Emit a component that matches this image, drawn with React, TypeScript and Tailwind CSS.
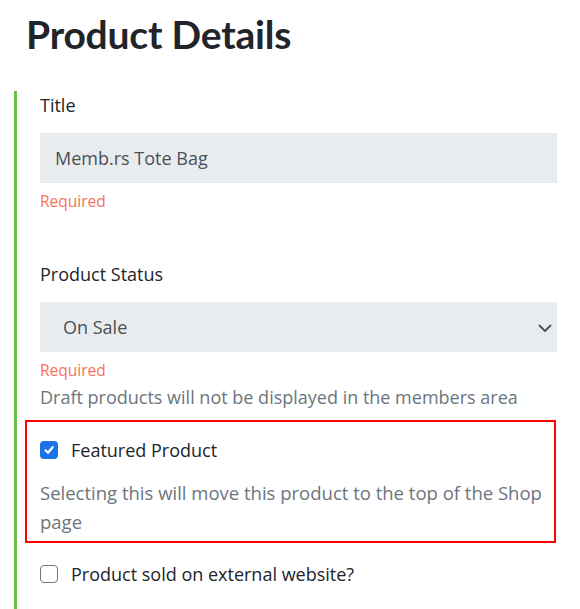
import React, { useState } from 'react';

const heading = { fontFamily: 'Lato, "Noto Sans", sans-serif' };
const body = { fontFamily: '"Open Sans", "Noto Sans", sans-serif' };

function Check({ checked, onToggle }: { checked: boolean; onToggle: () => void }) {
  return (
    <span
      onClick={onToggle}
      className={`flex h-[18px] w-[18px] shrink-0 items-center justify-center rounded-[4px] ${
        checked ? 'bg-[#1a73e8]' : 'border border-[#767676] bg-white'
      }`}
    >
      {checked && (
        <svg width="12" height="12" viewBox="0 0 12 12" fill="none">
          <path d="M2.5 6.3 L5 8.8 L9.7 3.2" stroke="white" strokeWidth="2.2" strokeLinecap="round" strokeLinejoin="round" />
        </svg>
      )}
    </span>
  );
}

export default function App() {
  const [featured, setFeatured] = useState(true);
  const [external, setExternal] = useState(false);

  return (
    <div className="min-h-screen bg-white text-[#212529]" style={body}>
      <div className="pt-[10px] pl-[26px]">
        <h1 className="text-[39px] leading-[48px] font-bold tracking-[-0.2px]" style={heading}>
          Product Details
        </h1>
      </div>

      <div className="mt-[33px] ml-[14px] border-l-[3px] border-[#6cc04a] pl-[23px] pr-[23px] pb-[30px]">
        {/* Title */}
        <label className="block pt-[2px] text-[18px] leading-[24px]">Title</label>
        <input
          className="mt-[16px] block w-full h-[50px] bg-[#e9ecef] px-[15px] text-[18px] text-[#495057] outline-none"
          defaultValue="Memb.rs Tote Bag"
          style={body}
        />
        <div className="mt-[6px] text-[15.5px] leading-[24px] text-[#f7705a]">Required</div>

        {/* Status */}
        <label className="block mt-[49px] text-[18px] leading-[24px]">Product Status</label>
        <div className="relative mt-[16px] h-[50px] bg-[#e9ecef]">
          <div className="flex h-full items-center pl-[23px] text-[18px] text-[#495057]">On Sale</div>
          <svg className="absolute right-[5px] top-[22px]" width="14" height="9" viewBox="0 0 14 9" fill="none">
            <path d="M1.5 1.5 L7 7 L12.5 1.5" stroke="#495057" strokeWidth="1.8" strokeLinecap="round" strokeLinejoin="round" />
          </svg>
        </div>
        <div className="mt-[6px] text-[15.5px] leading-[24px] text-[#f7705a]">Required</div>
        <div className="text-[18px] leading-[30px] text-[#6c757d]">Draft products will not be displayed in the members area</div>

        {/* Featured */}
        <div className="mt-[8px] -ml-[15px] mr-[1px] border-2 border-[#ff0000] pl-[13px] pr-[10px] pt-[16px] pb-[5px]">
          <label className="flex items-center gap-[13px] cursor-pointer">
            <Check checked={featured} onToggle={() => setFeatured(!featured)} />
            <span className="text-[18px] leading-[24px]">Featured Product</span>
          </label>
          <p className="mt-[16px] text-[18.5px] leading-[29px] text-[#6c757d]">
            Selecting this will move this product to the top of the Shop page
          </p>
        </div>

        {/* External */}
        <label className="mt-[19px] flex items-center gap-[13px] cursor-pointer">
          <Check checked={external} onToggle={() => setExternal(!external)} />
          <span className="text-[18px] leading-[24px]">Product sold on external website?</span>
        </label>
      </div>
    </div>
  );
}
